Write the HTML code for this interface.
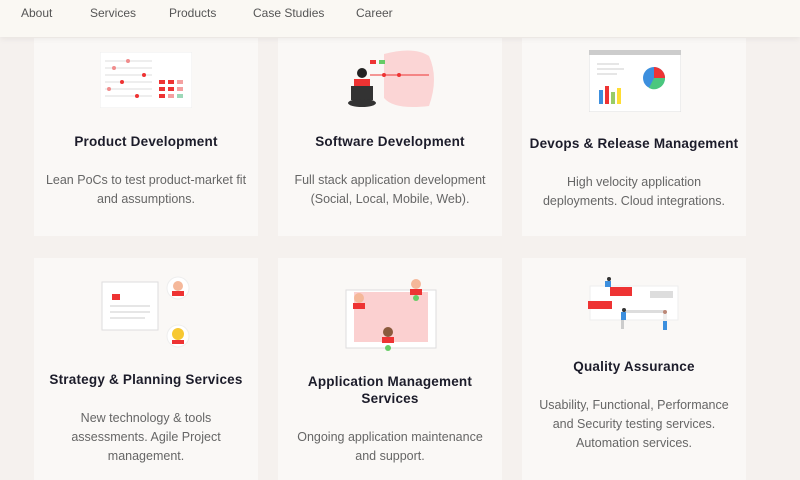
<!DOCTYPE html>
<html><head><style>
body{margin:0;width:800px;height:480px;overflow:hidden;background:#f5f1ee;font-family:"Liberation Sans",sans-serif;position:relative}
.nav{position:absolute;top:0;left:0;width:800px;height:37px;background:#faf8f3;box-shadow:0 2px 6px rgba(0,0,0,.06);z-index:2}
.nav span{position:absolute;top:6px;font-size:12px;color:#555}
.card{position:absolute;width:224px;background:#faf8f6;text-align:center}
.t{position:absolute;left:0;right:0;font-size:13.5px;letter-spacing:0.2px;font-weight:bold;color:#1c1c2a;line-height:17px;white-space:nowrap}
.d{position:absolute;left:0;right:0;font-size:12.5px;color:#666;line-height:19px;white-space:nowrap}
</style></head><body>
<div class="nav"><span style="left:21px">About</span><span style="left:90px">Services</span><span style="left:169px">Products</span><span style="left:253px">Case Studies</span><span style="left:356px">Career</span></div>

<div class="card" style="left:34px;top:38px;height:198px">
<svg style="position:absolute;left:66px;top:14px" width="92" height="56"><rect x="0" y="0" width="92" height="56" fill="#fff" stroke="#eee"/>
<g stroke="#ddd"><line x1="5" y1="9" x2="52" y2="9"/><line x1="5" y1="16" x2="52" y2="16"/><line x1="5" y1="23" x2="52" y2="23"/><line x1="5" y1="30" x2="52" y2="30"/><line x1="5" y1="37" x2="52" y2="37"/><line x1="5" y1="44" x2="52" y2="44"/></g>
<g fill="#e33"><circle cx="28" cy="9" r="2" fill="#f08c8c"/><circle cx="14" cy="16" r="2" fill="#f08c8c"/><circle cx="44" cy="23" r="2"/><circle cx="22" cy="30" r="2"/><circle cx="9" cy="37" r="2" fill="#f08c8c"/><circle cx="37" cy="44" r="2"/>
<rect x="59" y="28" width="6" height="4"/><rect x="68" y="28" width="6" height="4"/><rect x="77" y="28" width="6" height="4" fill="#f4a0a0"/><rect x="59" y="35" width="6" height="4"/><rect x="68" y="35" width="6" height="4"/><rect x="77" y="35" width="6" height="4" fill="#f4a0a0"/><rect x="59" y="42" width="6" height="4"/><rect x="68" y="42" width="6" height="4" fill="#f4a0a0"/><rect x="77" y="42" width="6" height="4" fill="#9dd8b8"/></g></svg>
<div class="t" style="top:95px">Product Development</div>
<div class="d" style="top:133px">Lean PoCs to test product-market fit<br>and assumptions.</div></div>

<div class="card" style="left:278px;top:38px;height:198px">
<svg style="position:absolute;left:66px;top:10px" width="95" height="65"><path d="M40 6 Q70 -2 85 8 Q95 30 85 58 Q50 62 40 50Z" fill="#fbd5d5"/>
<rect x="26" y="12" width="6" height="4" fill="#e33"/><rect x="35" y="12" width="6" height="4" fill="#6c6"/><line x1="26" y1="27" x2="85" y2="27" stroke="#e33"/><circle cx="40" cy="27" r="2" fill="#e33"/><circle cx="55" cy="27" r="2" fill="#e33"/>
<circle cx="18" cy="25" r="5" fill="#222"/><rect x="10" y="31" width="16" height="14" fill="#e33"/><rect x="7" y="38" width="22" height="14" fill="#333"/><ellipse cx="18" cy="55" rx="14" ry="4" fill="#333"/></svg>
<div class="t" style="top:95px">Software Development</div>
<div class="d" style="top:133px">Full stack application development<br>(Social, Local, Mobile, Web).</div></div>

<div class="card" style="left:522px;top:38px;height:198px">
<svg style="position:absolute;left:67px;top:12px" width="92" height="62"><rect x="0" y="0" width="92" height="62" fill="#fff" stroke="#ddd"/><rect x="0" y="0" width="92" height="5" fill="#ccc"/>
<g stroke="#ccc"><line x1="8" y1="14" x2="30" y2="14"/><line x1="8" y1="19" x2="35" y2="19"/><line x1="8" y1="24" x2="28" y2="24"/></g>
<circle cx="65" cy="28" r="11" fill="#3c8fde"/><path d="M65 28 L65 17 A11 11 0 0 1 76 28Z" fill="#e33"/><path d="M65 28 L76 28 A11 11 0 0 1 60 38Z" fill="#4bc77e"/>
<rect x="10" y="40" width="4" height="14" fill="#3c8fde"/><rect x="16" y="36" width="4" height="18" fill="#e33"/><rect x="22" y="42" width="4" height="12" fill="#9c6"/><rect x="28" y="38" width="4" height="16" fill="#fd3"/></svg>
<div class="t" style="top:97px">Devops &amp; Release Management</div>
<div class="d" style="top:135px">High velocity application<br>deployments. Cloud integrations.</div></div>

<div class="card" style="left:34px;top:258px;height:222px">
<svg style="position:absolute;left:66px;top:18px" width="95" height="75"><rect x="2" y="6" width="56" height="48" fill="#fff" stroke="#ddd"/><rect x="12" y="18" width="8" height="6" fill="#e33"/><g stroke="#ccc"><line x1="10" y1="30" x2="50" y2="30"/><line x1="10" y1="36" x2="50" y2="36"/><line x1="10" y1="42" x2="45" y2="42"/></g>
<circle cx="78" cy="12" r="11" fill="#fff" stroke="#eee"/><circle cx="78" cy="10" r="5" fill="#f5b89a"/><rect x="72" y="15" width="12" height="5" fill="#e33"/>
<circle cx="78" cy="60" r="11" fill="#fff" stroke="#eee"/><circle cx="78" cy="58" r="6" fill="#f7c832"/><rect x="72" y="64" width="12" height="4" fill="#e33"/></svg>
<div class="t" style="top:113px">Strategy &amp; Planning Services</div>
<div class="d" style="top:151px">New technology &amp; tools<br>assessments. Agile Project<br>management.</div></div>

<div class="card" style="left:278px;top:258px;height:222px">
<svg style="position:absolute;left:66px;top:18px" width="95" height="78"><rect x="2" y="14" width="90" height="58" fill="#fff" stroke="#ddd"/><rect x="10" y="16" width="74" height="50" fill="#fbd0d0"/>
<circle cx="15" cy="22" r="5" fill="#f5b89a"/><rect x="9" y="27" width="12" height="6" fill="#e33"/><circle cx="72" cy="8" r="5" fill="#f5b89a"/><rect x="66" y="13" width="12" height="6" fill="#e33"/><circle cx="72" cy="22" r="3" fill="#6c6"/>
<circle cx="44" cy="56" r="5" fill="#8a5a3c"/><rect x="38" y="61" width="12" height="6" fill="#e33"/><circle cx="44" cy="72" r="3" fill="#6c6"/></svg>
<div class="t" style="top:115px">Application Management<br>Services</div>
<div class="d" style="top:170px">Ongoing application maintenance<br>and support.</div></div>

<div class="card" style="left:522px;top:258px;height:222px">
<svg style="position:absolute;left:66px;top:18px" width="95" height="62"><rect x="2" y="10" width="88" height="34" fill="#fff" stroke="#eee"/><rect x="22" y="11" width="22" height="9" fill="#e33"/><rect x="62" y="15" width="23" height="7" fill="#ddd"/><rect x="0" y="25" width="24" height="8" fill="#e33"/><rect x="36" y="34" width="40" height="3" fill="#ddd"/>
<circle cx="21" cy="3" r="2" fill="#333"/><rect x="17" y="5" width="6" height="6" fill="#3c8fde"/><circle cx="36" cy="34" r="2" fill="#333"/><rect x="33" y="36" width="5" height="8" fill="#3c8fde"/><rect x="33" y="44" width="3" height="9" fill="#ccc"/><circle cx="77" cy="36" r="2" fill="#b87"/><rect x="75" y="38" width="4" height="7" fill="#eee"/><rect x="75" y="45" width="4" height="9" fill="#3c8fde"/></svg>
<div class="t" style="top:100px">Quality Assurance</div>
<div class="d" style="top:138px">Usability, Functional, Performance<br>and Security testing services.<br>Automation services.</div></div>
</body></html>
